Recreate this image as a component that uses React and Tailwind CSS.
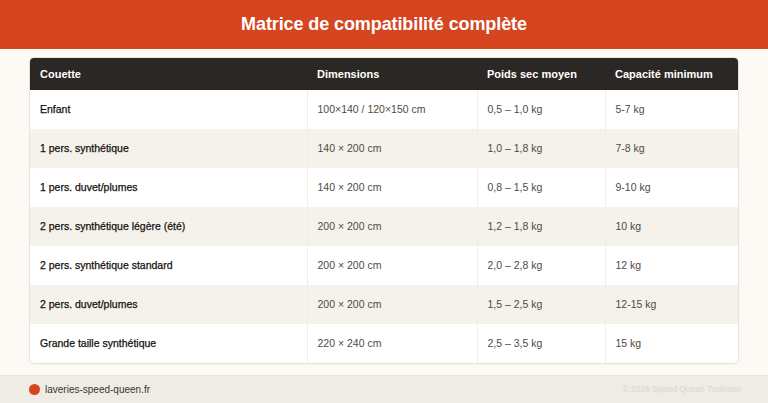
import React from "react";

const rows = [
  ["Enfant", "100×140 / 120×150 cm", "0,5 – 1,0 kg", "5-7 kg"],
  ["1 pers. synthétique", "140 × 200 cm", "1,0 – 1,8 kg", "7-8 kg"],
  ["1 pers. duvet/plumes", "140 × 200 cm", "0,8 – 1,5 kg", "9-10 kg"],
  ["2 pers. synthétique légère (été)", "200 × 200 cm", "1,2 – 1,8 kg", "10 kg"],
  ["2 pers. synthétique standard", "200 × 200 cm", "2,0 – 2,8 kg", "12 kg"],
  ["2 pers. duvet/plumes", "200 × 200 cm", "1,5 – 2,5 kg", "12-15 kg"],
  ["Grande taille synthétique", "220 × 240 cm", "2,5 – 3,5 kg", "15 kg"],
];

export default function App() {
  return (
    <div
      className="w-[768px] h-[403px] bg-[#fdfaf6] flex flex-col overflow-hidden"
      style={{ fontFamily: '"Liberation Sans", Arial, sans-serif' }}
    >
      <div className="h-[49px] shrink-0 bg-[#d5451f] flex items-center justify-center">
        <h1 className="text-white font-bold text-[18px] tracking-[-0.1px]">
          Matrice de compatibilité complète
        </h1>
      </div>
      <div className="px-[29px] pt-[8px] flex-1">
        <div className="rounded-[5px] overflow-hidden border border-[#e8e3dc] bg-white shadow-[0_1px_2px_rgba(0,0,0,0.04)]">
          <table className="w-full border-collapse text-[10.5px]">
            <colgroup>
              <col className="w-[277px]" />
              <col className="w-[170px]" />
              <col className="w-[128px]" />
              <col />
            </colgroup>
            <thead>
              <tr className="bg-[#2b2724] text-white h-[32px] text-[11px]">
                <th className="text-left font-bold pl-[10px]">Couette</th>
                <th className="text-left font-bold pl-[10px]">Dimensions</th>
                <th className="text-left font-bold pl-[10px]">Poids sec moyen</th>
                <th className="text-left font-bold pl-[10px]">Capacité minimum</th>
              </tr>
            </thead>
            <tbody>
              {rows.map((r, i) => (
                <tr
                  key={i}
                  className={`h-[39px] ${i % 2 === 1 ? "bg-[#f5f2ec]" : "bg-white"}`}
                >
                  <td className="pl-[10px] text-[#141110] border-r border-[#f1ede7] [-webkit-text-stroke:0.25px_#141110]">
                    {r[0]}
                  </td>
                  <td className="pl-[10px] text-[#4f4a45] border-r border-[#f1ede7]">{r[1]}</td>
                  <td className="pl-[10px] text-[#4f4a45] border-r border-[#f1ede7]">{r[2]}</td>
                  <td className="pl-[10px] text-[#4f4a45]">{r[3]}</td>
                </tr>
              ))}
            </tbody>
          </table>
        </div>
      </div>
      <div className="h-[28px] shrink-0 bg-[#efebe5] border-t border-[#e8e3dc] flex items-center justify-between pl-[29px] pr-[27px]">
        <div className="flex items-center gap-[5px]">
          <span className="w-[11px] h-[11px] rounded-full bg-[#d5451f] inline-block" />
          <span className="text-[10px] text-[#3a3531]">laveries-speed-queen.fr</span>
        </div>
        <span className="text-[8.5px] text-[#dcd7cf]">© 2026 Speed Queen Toulouse</span>
      </div>
    </div>
  );
}
